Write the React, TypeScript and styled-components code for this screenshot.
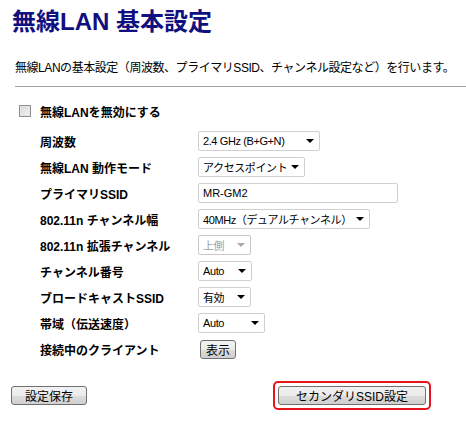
import { createGlobalStyle } from 'styled-components'
import styled from 'styled-components'

const GlobalStyle = createGlobalStyle`
	body {
		margin: 0;
		background: #fff;
		color: #000;
		font-family: 'Liberation Sans', 'Noto Sans CJK JP', sans-serif;
		font-size: 12px;
	}
`

type SelectField = { kind: 'select'; value: string; width: number; disabled?: boolean }
type InputField = { kind: 'input'; value: string; width: number }
type ButtonField = { kind: 'button'; value: string }
type Field = SelectField | InputField | ButtonField

const rows: { label: string; field: Field }[] = [
	{ label: '周波数', field: { kind: 'select', value: '2.4 GHz (B+G+N)', width: 122 } },
	{ label: '無線LAN 動作モード', field: { kind: 'select', value: 'アクセスポイント', width: 105 } },
	{ label: 'プライマリSSID', field: { kind: 'input', value: 'MR-GM2', width: 200 } },
	{ label: '802.11n チャンネル幅', field: { kind: 'select', value: '40MHz（デュアルチャンネル）', width: 172 } },
	{ label: '802.11n 拡張チャンネル', field: { kind: 'select', value: '上側', width: 53, disabled: true } },
	{ label: 'チャンネル番号', field: { kind: 'select', value: 'Auto', width: 54 } },
	{ label: 'ブロードキャストSSID', field: { kind: 'select', value: '有効', width: 53 } },
	{ label: '帯域（伝送速度）', field: { kind: 'select', value: 'Auto', width: 67 } },
	{ label: '接続中のクライアント', field: { kind: 'button', value: '表示' } },
]

function Control({ field }: { field: Field }) {
	if (field.kind === 'button') return <SmallButton>{field.value}</SmallButton>
	if (field.kind === 'input') return <TextBox style={{ width: field.width }}>{field.value}</TextBox>
	return (
		<SelectBox style={{ minWidth: field.width }} $disabled={field.disabled}>
			<SelectText>{field.value}</SelectText>
			<Arrow $disabled={field.disabled} />
		</SelectBox>
	)
}

export default function App() {
	return (
		<Page>
			<GlobalStyle />
			<Title>無線LAN 基本設定</Title>
			<Description>無線LANの基本設定（周波数、プライマリSSID、チャンネル設定など）を行います。</Description>
			<Rule />
			<CheckRow>
				<CheckBox />
				<Label>無線LANを無効にする</Label>
			</CheckRow>
			<FormGrid>
				{rows.map(r => (
					<FormRow key={r.label}>
						<Label>{r.label}</Label>
						<Control field={r.field} />
					</FormRow>
				))}
			</FormGrid>
			<Footer>
				<PushButton $width={76}>設定保存</PushButton>
				<Highlight>
					<PushButton $width={148}>セカンダリSSID設定</PushButton>
				</Highlight>
			</Footer>
		</Page>
	)
}

const Page = styled.div`
	width: 466px;
	overflow: hidden;
`

const Title = styled.h1`
	margin: 0;
	padding: 7px 0 0 12px;
	font-size: 24px;
	line-height: 29px;
	font-weight: bold;
	color: #10107e;
`

const Description = styled.p`
	margin: 0;
	padding: 24px 0 0 15px;
	line-height: 16px;
	font-size: 12px;
	letter-spacing: -0.45px;
	white-space: nowrap;
`

const Rule = styled.div`
	margin: 10px 0 0 15px;
	height: 1px;
	background: #a0a0a0;
`

const CheckRow = styled.div`
	display: flex;
	align-items: center;
	gap: 9px;
	height: 26px;
	margin-top: 11px;
	padding-left: 19px;
`

const CheckBox = styled.span`
	width: 10px;
	height: 10px;
	border: 1px solid #8f8f8f;
	background: linear-gradient(135deg, #d4d4d4, #f7f7f7);
	box-shadow: inset 0 0 0 1px #e4e4e4;
`

const Label = styled.span`
	font-weight: bold;
	font-size: 12px;
	white-space: nowrap;
`

const FormGrid = styled.div`
	margin-top: 4px;
	padding-left: 40px;
	display: grid;
	grid-template-columns: 158px 1fr;
	grid-auto-rows: 26px;
`

const FormRow = styled.div`
	display: contents;

	& > * {
		align-self: center;
		justify-self: start;
	}
`

const SelectBox = styled.div<{ $disabled?: boolean }>`
	box-sizing: border-box;
	height: 20px;
	display: flex;
	align-items: center;
	padding: 0 5px 0 4px;
	border: 1px solid ${p => (p.$disabled ? '#c8c8c8' : '#d0d0d0')};
	border-radius: 2px;
	background: #fff;
	color: ${p => (p.$disabled ? '#a0a0a0' : '#000')};
	font-size: 11px;
`

const SelectText = styled.span`
	flex: 1;
	white-space: nowrap;
	letter-spacing: -0.4px;
`

const Arrow = styled.span<{ $disabled?: boolean }>`
	flex: none;
	width: 0;
	height: 0;
	border-left: 4px solid transparent;
	border-right: 4px solid transparent;
	border-top: 4px solid ${p => (p.$disabled ? '#a8a8a8' : '#000')};
	margin-left: 4px;
`

const TextBox = styled.div`
	box-sizing: border-box;
	height: 20px;
	padding: 0 4px;
	display: flex;
	align-items: center;
	border: 1px solid #d0d0d0;
	border-radius: 2px;
	font-size: 11px;
`

const buttonLook = `
	box-sizing: border-box;
	display: flex;
	align-items: center;
	justify-content: center;
	border: 1px solid #707070;
	border-radius: 3px;
	background: linear-gradient(#f2f2f2, #ebebeb 50%, #dddddd 51%, #cfcfcf);
	font-family: 'Liberation Sans', 'Noto Sans CJK JP', sans-serif;
	font-size: 12px;
	color: #000;
	padding: 0;
	white-space: nowrap;
`

const SmallButton = styled.button`
	${buttonLook}
	margin-left: 2px;
	width: 36px;
	height: 19px;
`

const PushButton = styled.button<{ $width: number }>`
	${buttonLook}
	width: ${p => p.$width}px;
	height: 19px;
`

const Footer = styled.div`
	display: flex;
	align-items: center;
	justify-content: space-between;
	margin-top: 19px;
	padding: 0 35px 0 11px;
`

const Highlight = styled.div`
	border: 2px solid #e8141c;
	border-radius: 5px;
	padding: 3px;
`
